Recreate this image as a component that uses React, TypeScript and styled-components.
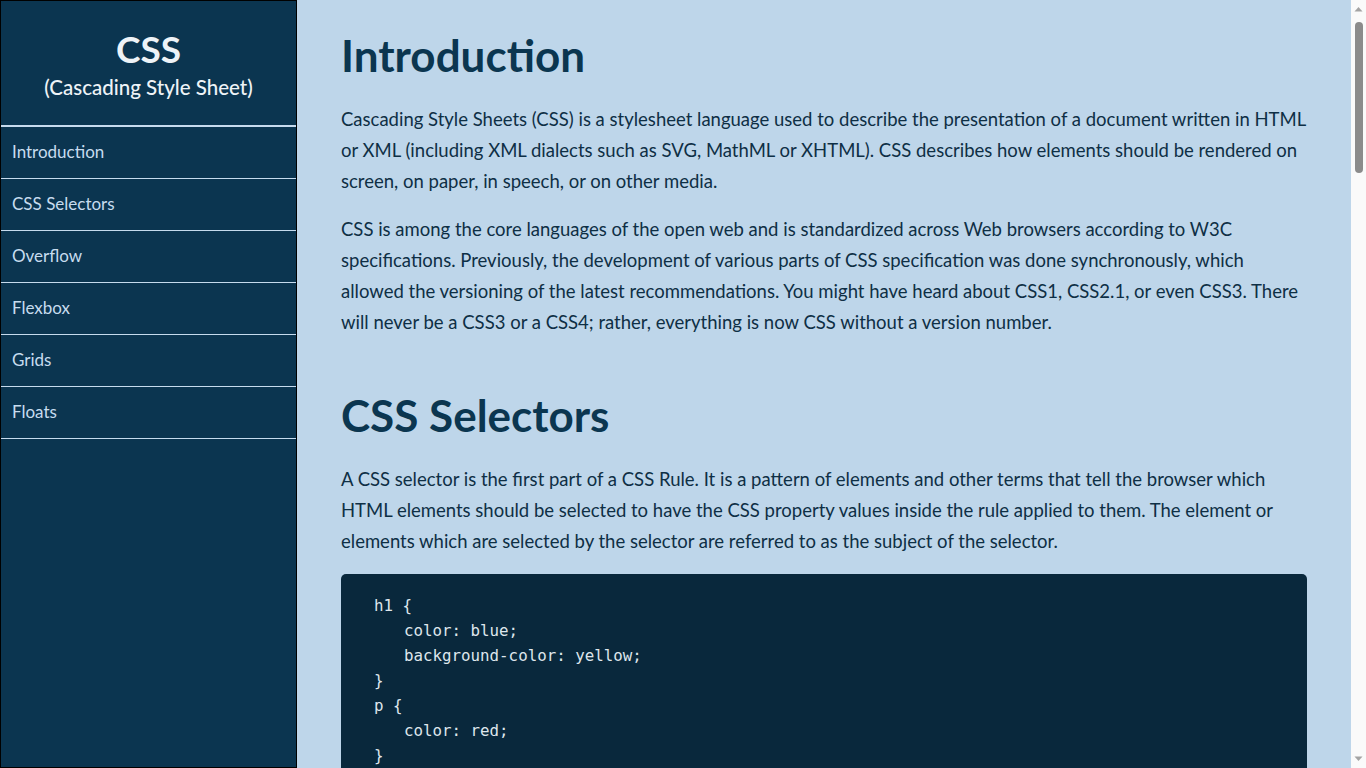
import React from "react";
import styled, { createGlobalStyle } from "styled-components";

const Global = createGlobalStyle`
  html, body { margin: 0; padding: 0; height: 100%; overflow: hidden; }
  body {
    background: #bed6ea;
    font-family: Lato, "Open Sans", sans-serif;
    color: #0b3650;
  }
  * { box-sizing: border-box; }
`;

const Layout = styled.div`
  display: grid;
  grid-template-columns: 297px 1fr 15px;
  height: 100vh;
`;

const Sidebar = styled.nav`
  height: 100vh;
  background: #0b3550;
  border: 1px solid #000;
  display: flex;
  flex-direction: column;
`;

const Brand = styled.header`
  height: 126px;
  display: flex;
  flex-direction: column;
  align-items: center;
  justify-content: center;
  color: #eef3f7;
  border-bottom: 2px solid #c6dbee;
  padding-top: 4px;
`;

const BrandTitle = styled.h1`
  margin: 0;
  font-size: 37px;
  font-weight: 700;
  line-height: 44px;
`;

const BrandSub = styled.div`
  font-size: 20.5px;
  font-weight: 500;
  line-height: 32px;
`;

const NavLink = styled.a`
  display: flex;
  align-items: center;
  height: 52px;
  padding: 0 11px 2px;
  color: #c7dcef;
  font-size: 17px;
  text-decoration: none;
  border-bottom: 1px solid #c6dbee;
`;

const Main = styled.main`
  height: 100vh;
  overflow-y: scroll;
  padding: 25px 44px 60px;
`;

const ScrollTrack = styled.div`
  height: 100vh;
  background: #fafafa;
  display: flex;
  flex-direction: column;
  align-items: center;
`;

const Arrow = styled.svg`
  flex: none;
  width: 15px;
  height: 17px;
  display: block;
`;

const Thumb = styled.div`
  flex: none;
  width: 8px;
  height: 151px;
  margin-top: 5px;
  border-radius: 4px;
  background: #8b8b8b;
`;

const TrackSpace = styled.div`
  flex: 1;
`;

const Section = styled.section`
  margin-bottom: 47px;
`;

const Heading = styled.h2`
  margin: 0 0 19px;
  font-size: 44px;
  font-weight: 700;
  line-height: 60px;
  color: #0b3650;
`;

const Para = styled.p`
  margin: 0 0 17px;
  font-size: 18.5px;
  line-height: 31px;
  color: #0e2f45;
`;

const Code = styled.pre`
  margin: 0 0 16px;
  background: #09283c;
  border-radius: 5px;
  padding: 19px 33px 20px;
  font-family: "DejaVu Sans Mono", monospace;
  font-size: 15.8px;
  line-height: 25px;
  color: #dfe6ec;
`;

const Indent = styled.span`
  padding-left: 30px;
`;

const navItems = ["Introduction", "CSS Selectors", "Overflow", "Flexbox", "Grids", "Floats"];

export default function App() {
  return (
    <>
      <Global />
      <Layout>
        <Sidebar>
          <Brand>
            <BrandTitle>CSS</BrandTitle>
            <BrandSub>(Cascading Style Sheet)</BrandSub>
          </Brand>
          {navItems.map((n) => (
            <NavLink key={n} href={"#" + n}>{n}</NavLink>
          ))}
        </Sidebar>
        <Main>
          <Section id="Introduction">
            <Heading>Introduction</Heading>
            <Para>
              Cascading Style Sheets (CSS) is a stylesheet language used to describe the presentation of a document written in HTML or XML (including XML dialects such as SVG, MathML or XHTML). CSS describes how elements should be rendered on screen, on paper, in speech, or on other media.
            </Para>
            <Para>
              CSS is among the core languages of the open web and is standardized across Web browsers according to W3C specifications. Previously, the development of various parts of CSS specification was done synchronously, which allowed the versioning of the latest recommendations. You might have heard about CSS1, CSS2.1, or even CSS3. There will never be a CSS3 or a CSS4; rather, everything is now CSS without a version number.
            </Para>
          </Section>
          <Section id="CSS Selectors">
            <Heading>CSS Selectors</Heading>
            <Para>
              A CSS selector is the first part of a CSS Rule. It is a pattern of elements and other terms that tell the browser which HTML elements should be selected to have the CSS property values inside the rule applied to them. The element or elements which are selected by the selector are referred to as the subject of the selector.
            </Para>
            <Code>
              {"h1 {\n"}<Indent>{"color: blue;"}</Indent>{"\n"}<Indent>{"background-color: yellow;"}</Indent>{"\n}\np {\n"}<Indent>{"color: red;"}</Indent>{"\n}"}
            </Code>
          </Section>
          <Section id="Overflow">
            <Heading>Overflow</Heading>
            <Para>
              Overflow happens when there is too much content to fit in a box. CSS provides various tools to manage overflow. As you go further with CSS layout and writing CSS, you will encounter more overflow situations.
            </Para>
            <Code>
              {".box {\n"}<Indent>{"width: 200px;"}</Indent>{"\n"}<Indent>{"height: 100px;"}</Indent>{"\n"}<Indent>{"overflow: hidden;"}</Indent>{"\n}"}
            </Code>
          </Section>
          <Section id="Flexbox">
            <Heading>Flexbox</Heading>
            <Para>
              Flexbox is a one-dimensional layout method for arranging items in rows or columns. Items flex (expand) to fill additional space or shrink to fit into smaller spaces.
            </Para>
            <Code>
              {".container {\n"}<Indent>{"display: flex;"}</Indent>{"\n"}<Indent>{"justify-content: space-between;"}</Indent>{"\n}"}
            </Code>
          </Section>
          <Section id="Grids">
            <Heading>Grids</Heading>
            <Para>
              CSS grid layout is a two-dimensional layout system for the web. It lets you organize content into rows and columns and offers many features to simplify the creation of complex layouts.
            </Para>
            <Code>
              {".container {\n"}<Indent>{"display: grid;"}</Indent>{"\n"}<Indent>{"grid-template-columns: 1fr 1fr 1fr;"}</Indent>{"\n"}<Indent>{"gap: 20px;"}</Indent>{"\n}"}
            </Code>
          </Section>
          <Section id="Floats">
            <Heading>Floats</Heading>
            <Para>
              Originally for floating images inside blocks of text, the float property became one of the most commonly used tools for creating multiple column layouts on webpages. With the advent of flexbox and grid it has now returned to its original purpose.
            </Para>
            <Code>
              {"img {\n"}<Indent>{"float: left;"}</Indent>{"\n"}<Indent>{"margin-right: 15px;"}</Indent>{"\n}"}
            </Code>
          </Section>
        </Main>
        <ScrollTrack aria-hidden="true">
          <Arrow viewBox="0 0 15 17">
            <path d="M3.5 11.5 L7.5 7 L11.5 11.5 Z" fill="#a3a3a3" />
          </Arrow>
          <Thumb />
          <TrackSpace />
          <Arrow viewBox="0 0 15 17">
            <path d="M3.5 5.5 L7.5 10 L11.5 5.5 Z" fill="#a3a3a3" />
          </Arrow>
        </ScrollTrack>
      </Layout>
    </>
  );
}
